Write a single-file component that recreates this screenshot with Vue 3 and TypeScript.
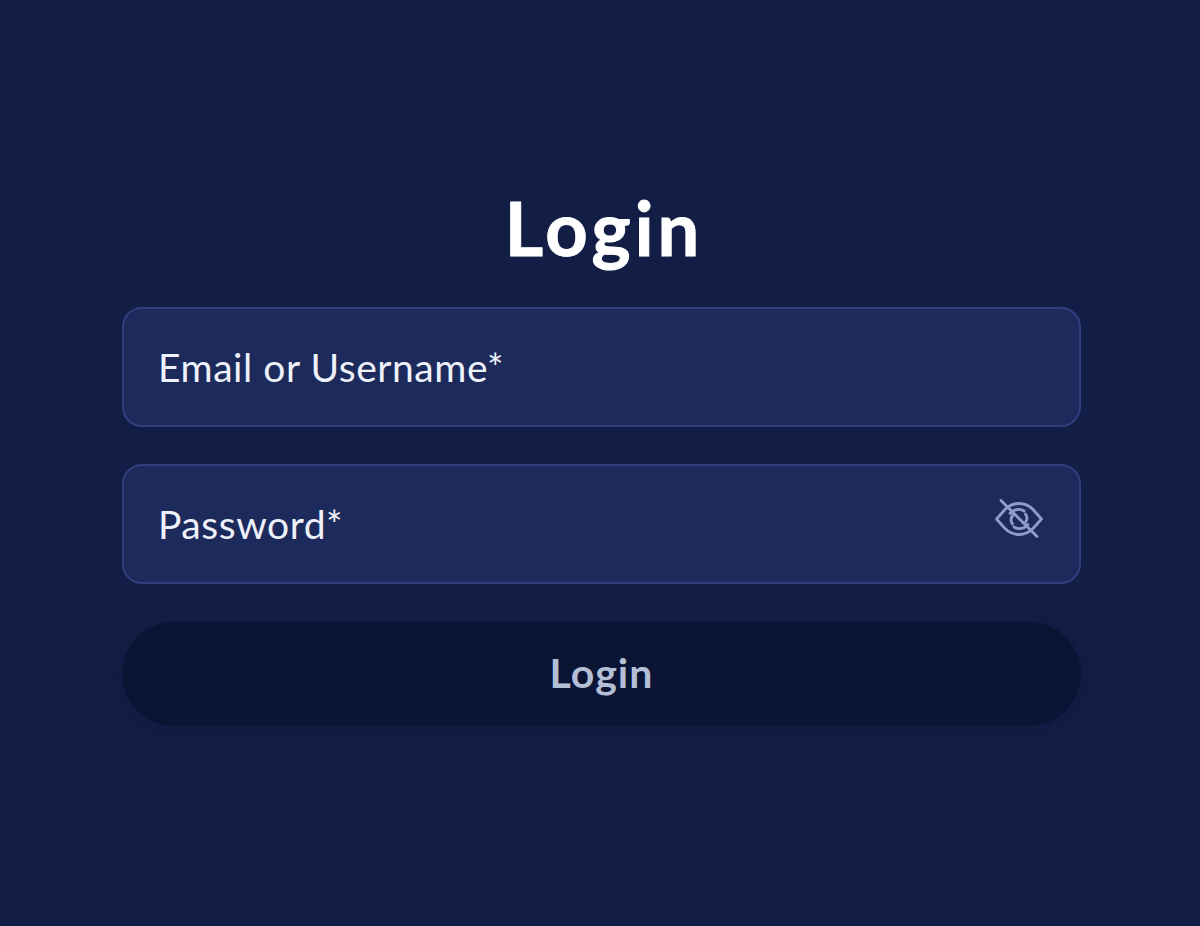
<script setup lang="ts">
import { ref } from "vue";

const email = ref<string>("");
const password = ref<string>("");
</script>

<template>
  <main class="page">
    <form class="form" @submit.prevent>
      <h1 class="title">Login</h1>
      <div class="field">
        <input v-model="email" class="input" type="text" placeholder="Email or Username*" />
      </div>
      <div class="field">
        <input v-model="password" class="input" type="password" placeholder="Password*" />
        <svg class="eye" viewBox="0 0 48 40" fill="none" stroke="currentColor" stroke-width="2.8" stroke-linecap="round" stroke-linejoin="round">
          <path d="M1.500 20L10 10.500C14 6.500 19 4.500 24 4.500s10 2 14 6L46.500 20 38 29.500C34 33.500 29 35.500 24 35.500s-10-2-14-6Z" />
          <path d="M15 14.500a10.500 10.500 0 0 1 14-2.500M33 25.500a10.500 10.500 0 0 1-14 2.500" />
          <path d="M17.500 25a7.500 7.500 0 0 1 .500-9M30.500 15a7.500 7.500 0 0 1-.500 9" />
          <path d="M6 1.500l36 36" />
        </svg>
      </div>
      <button class="submit" type="submit">Login</button>
    </form>
  </main>
</template>

<style>
html,
body {
  margin: 0;
  background: #121e45;
}
</style>

<style scoped>
.page {
  height: 926px;
  box-sizing: border-box;
  padding: 186px 119px 0 122px;
  background: #121e45;
  font-family: Lato, "Open Sans", sans-serif;
}
.form {
  display: flex;
  flex-direction: column;
  gap: 37px;
}
.title {
  margin: 0;
  height: 84px;
  padding-left: 5px;
  line-height: 84px;
  font-size: 74px;
  font-weight: 700;
  letter-spacing: 4px;
  color: #ffffff;
  text-align: center;
  -webkit-text-stroke: 1px #ffffff;
}
.field {
  position: relative;
  height: 120px;
}
.input {
  width: 100%;
  height: 100%;
  box-sizing: border-box;
  padding: 0 100px 0 34px;
  background: #1d2a5c;
  border: 2px solid #2f3f7d;
  border-radius: 20px;
  outline: none;
  font-family: inherit;
  font-size: 39px;
  letter-spacing: 0.550px;
  color: #f1f4fb;
}
.input::placeholder {
  color: #eef1fa;
  opacity: 1;
}
.eye {
  position: absolute;
  top: 35px;
  right: 38px;
  width: 48px;
  height: 40px;
  color: #8c9ec9;
}
.submit {
  height: 104px;
  margin-top: 1px;
  padding: 0 0 4px;
  border: none;
  border-radius: 52px;
  background: #0a1536;
  box-shadow: 0 4px 14px rgba(10, 21, 54, 0.2);
  font-family: inherit;
  font-size: 41px;
  font-weight: 700;
  letter-spacing: 1px;
  color: #b4bfd6;
  cursor: pointer;
}
</style>
